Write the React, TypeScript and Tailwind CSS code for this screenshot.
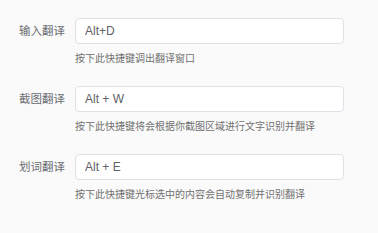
const rows = [
  { label: "输入翻译", value: "Alt+D", help: "按下此快捷键调出翻译窗口" },
  { label: "截图翻译", value: "Alt + W", help: "按下此快捷键将会根据你截图区域进行文字识别并翻译" },
  { label: "划词翻译", value: "Alt + E", help: "按下此快捷键光标选中的内容会自动复制并识别翻译" },
];

export default function App() {
  return (
    <div
      className="h-[233px] w-[378px] bg-[#fafafa] pt-[18px]"
      style={{ fontFamily: '"Liberation Sans", "Noto Sans CJK SC", sans-serif' }}
    >
      {rows.map((row) => (
        <div key={row.label} className="mb-[20px] flex">
          <div className="w-[65px] shrink-0 pt-[6px] text-right text-[11.5px] leading-[14px] text-[#6b6d72]">
            {row.label}
          </div>
          <div className="ml-[10px] w-[269px]">
            <input
              readOnly
              value={row.value}
              className="h-[26px] w-full rounded-[4px] border border-[#e0e1e8] bg-white px-[9px] text-[12px] text-[#606266] outline-none"
            />
            <p className="mt-[8px] text-[10px] leading-[14px] text-[#707070]">{row.help}</p>
          </div>
        </div>
      ))}
    </div>
  );
}
